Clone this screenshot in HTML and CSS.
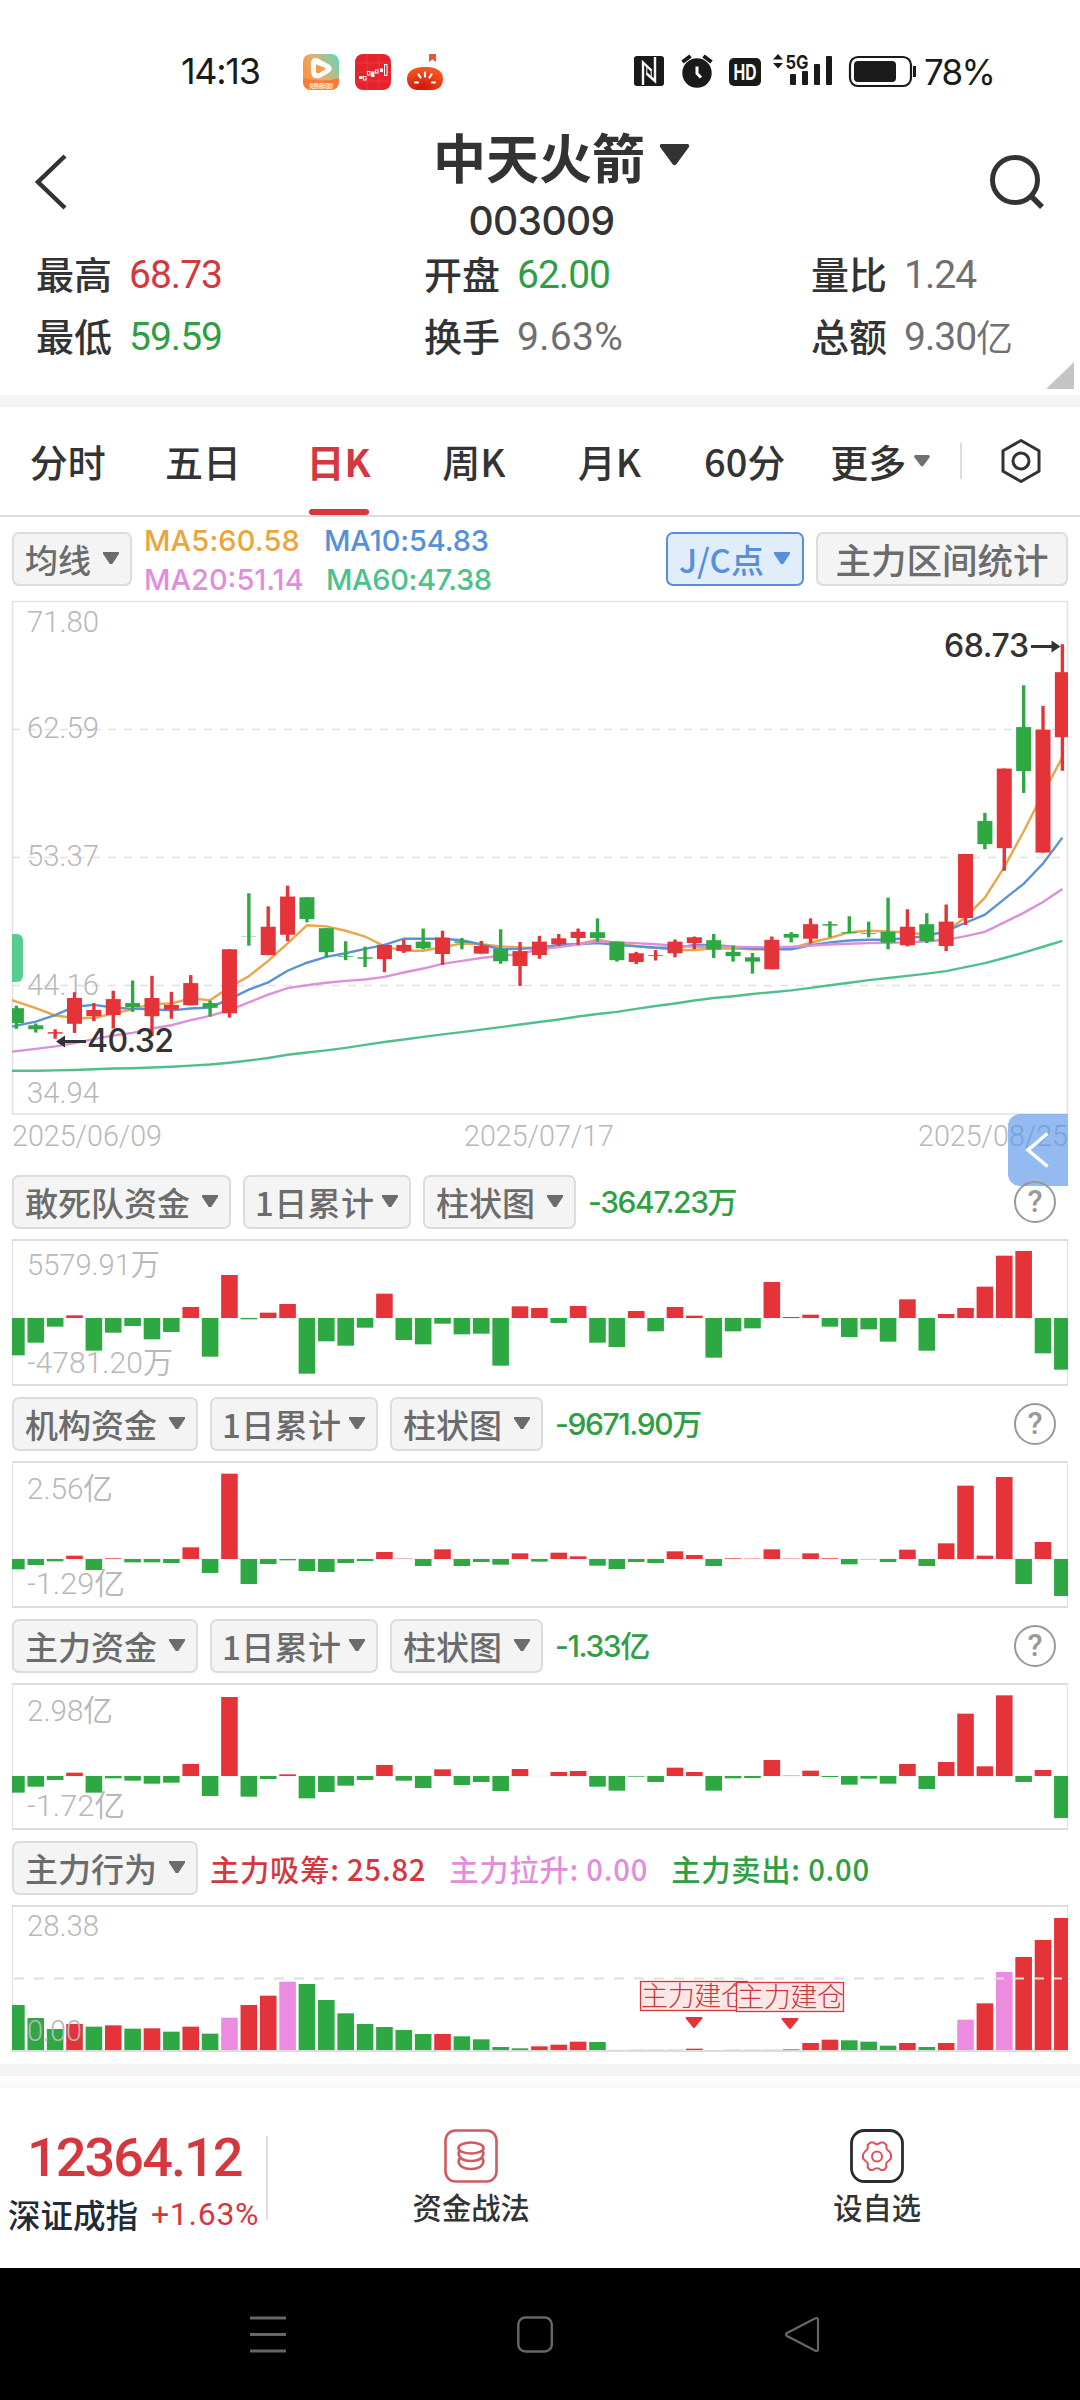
FILE: index.html
```html
<!DOCTYPE html>
<html lang="zh-CN">
<head>
<meta charset="utf-8">
<title>中天火箭 003009</title>
<link rel="stylesheet" href="styles.css">
</head>
<body>
<div class="screen">
  <div class="status">
    <span class="clock">14:13</span>
    <svg class="app" viewBox="0 0 36 36">
      <defs>
        <linearGradient id="ga" x1="0" y1=".6" x2="1" y2="0"><stop offset="0" stop-color="#ff9140"/><stop offset=".45" stop-color="#e0b070"/><stop offset="1" stop-color="#4fdcc0"/></linearGradient>
      </defs>
      <rect width="36" height="36" rx="8" fill="url(#ga)"/>
      <path d="M0 24Q18 29 36 24V28a8 8 0 0 1-8 8H8a8 8 0 0 1-8-8z" fill="#fa7a3c"/>
      <path d="M8 10Q8 2.500 15 4.500L26 10.500Q31 14 27 18L17 24Q8 26 8 17z" fill="#fff"/>
      <path d="M13 10.500L22 13.800Q23 14.500 22 15.500L15.500 19.500Q13 20 13 17.500z" fill="#f59a48"/>
      <text x="18" y="33.500" text-anchor="middle" font-size="5.500" font-weight="700" fill="#ffe9d0" textLength="24">免费看短剧</text>
    </svg>
    <svg class="app" viewBox="0 0 36 36">
      <rect width="36" height="36" rx="8" fill="#e6222b"/>
      <path d="M0 9H36M0 18H36M0 27H36M12 0V36M24 0V36" stroke="#f04a4c" stroke-width=".5"/>
      <g fill="#fff"><rect x="4" y="22" width="3.500" height="3"/><rect x="16" y="17.500" width="3.500" height="5.500"/><rect x="25" y="14.500" width="3" height="3.500"/></g>
      <g fill="none" stroke="#fff" stroke-width="1"><rect x="8.500" y="22.500" width="2.500" height="3.500"/><rect x="12.500" y="17.500" width="2.500" height="3.500"/><rect x="20.500" y="16" width="2.500" height="3"/><rect x="29.500" y="10.500" width="2.500" height="11"/></g>
    </svg>
    <svg class="app" viewBox="0 0 36 36">
      <defs><radialGradient id="gb" cx=".4" cy=".9" r=".8"><stop offset="0" stop-color="#cf1608"/><stop offset="1" stop-color="#f4541f"/></radialGradient></defs>
      <path d="M22 0h7v8l-3.500-2.500L22 8z" fill="#e65b30"/>
      <path d="M18 13C32 13 36 19 36 25C36 32 31 36 26 36H10C5 36 0 32 0 25C0 19 4 13 18 13z" fill="url(#gb)"/>
      <path d="M18 18.500v4M11.500 20.500l2 3M24.500 20.500l-2 3M8 28.500h3M28 28.500h-3" stroke="#fff" stroke-width="2.200" stroke-linecap="round"/>
    </svg>
    <div class="status-right">
      <svg width="30" height="30" viewBox="0 0 30 30"><rect width="30" height="30" rx="3" fill="#1a1a1a"/><path d="M9 29V6.500L17.500 14.500M12.500 17.500L21 25V1" fill="none" stroke="#fff" stroke-width="2.400"/><path d="M12.800 11V18M17.200 13.500V20.500" stroke="#fff" stroke-width="1"/></svg>
      <svg class="alarm" width="32" height="34" viewBox="0 0 32 34"><circle cx="16" cy="19" r="14.700" fill="#1a1a1a"/><path d="M1.500 8L9.500 2M30.500 8L22.500 2" stroke="#1a1a1a" stroke-width="4"/><path d="M16 12.500V19.500L20 23.500" fill="none" stroke="#fff" stroke-width="3"/></svg>
      <svg class="hd" width="32" height="28" viewBox="0 0 32 28"><rect width="32" height="28" rx="5" fill="#1a1a1a"/><text x="16" y="21.500" text-anchor="middle" font-size="21" font-weight="700" fill="#fff" textLength="23" lengthAdjust="spacingAndGlyphs">HD</text></svg>
      <svg class="signal" width="61" height="33" viewBox="0 0 61 33"><path d="M6 1L11 6.500H1zM6 15.500L11 10H1z" fill="#1a1a1a"/><text x="13.500" y="15.500" font-size="19" font-weight="700" fill="#1a1a1a" textLength="23" lengthAdjust="spacingAndGlyphs">5G</text><g fill="#1a1a1a"><rect x="18" y="21" width="6" height="11" rx="1"/><rect x="30" y="18" width="6" height="14" rx="1"/><rect x="42" y="11" width="6" height="21" rx="1"/><rect x="54" y="3" width="6" height="29" rx="1"/></g></svg>
      <svg class="battery" width="67" height="31" viewBox="0 0 67 31"><rect x="1" y="1" width="61" height="29" rx="8" fill="none" stroke="#1a1a1a" stroke-width="2.200"/><rect x="5" y="5" width="42" height="21" rx="4" fill="#1a1a1a"/><path d="M65.500 10V21" stroke="#1a1a1a" stroke-width="3"/></svg>
      <span class="pct">78%</span>
    </div>
  </div>

  <header class="head">
    <svg class="back" width="32" height="58" viewBox="0 0 32 58"><path d="M30 3L3 29L30 55" fill="none" stroke="#333" stroke-width="4.500"/></svg>
    <div class="title">
      <div class="name">中天火箭<svg width="31" height="22" viewBox="0 0 31 22"><path d="M2 0H29Q31 1 30 3L17.500 20Q15.500 22.500 13.500 20L1 3Q0 1 2 0z" fill="#333"/></svg></div>
      <div class="code">003009</div>
    </div>
    <svg class="search" width="56" height="56" viewBox="0 0 56 56"><circle cx="26" cy="26" r="22.500" fill="none" stroke="#333" stroke-width="5"/><path d="M42 42L53 53" stroke="#333" stroke-width="5.500"/></svg>
  </header>

  <section class="stats">
    <div><b>最高</b><span class="red">68.73</span></div>
    <div><b>开盘</b><span class="green">62.00</span></div>
    <div><b>量比</b><span>1.24</span></div>
    <div><b>最低</b><span class="green">59.59</span></div>
    <div><b>换手</b><span class="wide">9.63%</span></div>
    <div><b>总额</b><span>9.30<i>亿</i></span></div>
    <svg class="corner" width="28" height="27" viewBox="0 0 28 27"><path d="M28 0V27H0z" fill="#c4c4c4"/></svg>
  </section>

  <nav class="tabs">
    <a>分时</a><a>五日</a><a class="on">日K</a><a>周K</a><a>月K</a><a>60分</a>
    <a class="more">更多<svg width="16" height="12" viewBox="0 0 16 12"><path d="M1 0H15Q16.500 1 15.500 2.500L9.500 10.500Q8 12.500 6.500 10.500L.5 2.500Q-.5 1 1 0z" fill="#707070"/></svg></a>
    <i class="sep"></i>
    <svg class="hex" width="42" height="46" viewBox="0 0 42 46"><path d="M21 2.500L39 12.800V33.200L21 43.500L3 33.200V12.800z" fill="none" stroke="#333" stroke-width="3" stroke-linejoin="round"/><circle cx="21" cy="23" r="8" fill="none" stroke="#333" stroke-width="3"/></svg>
  </nav>

  <section class="ma">
    <div class="btn w120">均线<i class="tri"></i></div>
    <div class="legend">
      <span class="l5">MA5:60.58</span><span class="l10">MA10:54.83</span>
      <span class="l20">MA20:51.14</span><span class="l60">MA60:47.38</span>
    </div>
    <div class="btn jc">J/C点<i class="tri"></i></div>
    <div class="btn range">主力区间统计</div>
  </section>

  <section class="main">
    <svg id="kline" width="1080" height="575" viewBox="0 600 1080 575">
      <rect x="12.500" y="601.500" width="1055" height="512.500" fill="none" stroke="#e2e2e2" stroke-width="1.500"/>
      <path d="M12 729.500H1067M12 857.500H1067M12 985.500H1067" stroke="#e0e0e0" stroke-width="1.300" stroke-dasharray="8 8"/>
      <path d="M12 934h5a6 6 0 0 1 6 6v36a6 6 0 0 1-6 6h-5z" fill="#58cd90"/>
      <g class="axis">
        <text x="27" y="632" textLength="72">71.80</text>
        <text x="27" y="738" textLength="72">62.59</text>
        <text x="27" y="865.500" textLength="72">53.37</text>
        <text x="27" y="994.500" textLength="72">44.16</text>
        <text x="27" y="1102.500" textLength="72">34.94</text>
        <text x="12" y="1146" textLength="150">2025/06/09</text>
        <text x="464" y="1146" textLength="150">2025/07/17</text>
        <text x="918" y="1146" textLength="150">2025/08/25</text>
      </g>
      <g id="lines"></g>
      <g id="candles"></g>
      <g class="mark">
        <text x="87" y="1052" textLength="87">40.32</text>
        <text x="944" y="657" textLength="85">68.73</text>
        <path d="M86 1041.500H62M1031 646.500H1054" stroke="#333" stroke-width="3"/>
        <path d="M56 1041.500l9-6v12zM1060.500 646.500l-9-6v12z"/>
      </g>
    </svg>
    <div class="drawer"><svg width="60" height="72" viewBox="0 0 60 72"><path d="M39.500 19.500L20 36L39.500 52.500" fill="none" stroke="#fff" stroke-width="3.500"/></svg></div>
  </section>

  <section class="panel">
    <div class="bar"><div class="btn w218">敢死队资金<i class="tri"></i></div><div class="btn w168">1日累计<i class="tri"></i></div><div class="btn w153">柱状图<i class="tri"></i></div><span class="val">-3647.23<i>万</i></span><span class="help">?</span></div>
    <svg class="plot" width="1080" height="147" viewBox="0 0 1080 147"><g id="h1"></g><g class="axis"><text x="27" y="36" textLength="133">5579.91万</text><text x="27" y="134" textLength="146">-4781.20万</text></g></svg>
  </section>
  <section class="panel">
    <div class="bar"><div class="btn w186">机构资金<i class="tri"></i></div><div class="btn w168">1日累计<i class="tri"></i></div><div class="btn w153">柱状图<i class="tri"></i></div><span class="val">-9671.90<i>万</i></span><span class="help">?</span></div>
    <svg class="plot" width="1080" height="147" viewBox="0 0 1080 147"><g id="h2"></g><g class="axis"><text x="27" y="38" textLength="86">2.56亿</text><text x="27" y="133" textLength="98">-1.29亿</text></g></svg>
  </section>
  <section class="panel">
    <div class="bar"><div class="btn w186">主力资金<i class="tri"></i></div><div class="btn w168">1日累计<i class="tri"></i></div><div class="btn w153">柱状图<i class="tri"></i></div><span class="val">-1.33<i>亿</i></span><span class="help">?</span></div>
    <svg class="plot" width="1080" height="147" viewBox="0 0 1080 147"><g id="h3"></g><g class="axis"><text x="27" y="38" textLength="86">2.98亿</text><text x="27" y="133" textLength="98">-1.72亿</text></g></svg>
  </section>
  <section class="panel">
    <div class="bar"><div class="btn w186">主力行为<i class="tri"></i></div><span class="act red">主力吸筹: 25.82</span><span class="act pink">主力拉升: 0.00</span><span class="act green">主力卖出: 0.00</span></div>
    <svg class="plot" width="1080" height="147" viewBox="0 0 1080 147">
      <g id="h4"></g>
      <path d="M14 73.500H1062" stroke="#dedede" stroke-width="2" stroke-dasharray="10 10"/>
      <g class="axis"><text x="27" y="31" textLength="72">28.38</text><text x="27" y="135.500" textLength="55">0.00</text></g>
      <g class="tags">
        <rect x="640.500" y="76.500" width="107" height="29"/><text x="641" y="101" textLength="107">主力建仓</text>
        <rect x="736.500" y="77.500" width="107" height="29"/><text x="737" y="102" textLength="107">主力建仓</text>
        <path d="M686 112H702Q703 113 702 114L695 122.500Q694 124 693 122.500L686 114Q685 113 686 112zM782 113H798Q799 114 798 115L791 123.500Q790 125 789 123.500L782 115Q781 114 782 113z"/>
      </g>
    </svg>
  </section>

  <div class="strip"></div>
  <div class="shade"></div>
  <footer class="foot">
    <div class="index"><div class="num">12364.12</div><div class="sub">深证成指<span>+1.63%</span></div></div>
    <div class="act1"><svg width="54" height="54" viewBox="0 0 54 54"><rect x="1.500" y="1.500" width="51" height="51" rx="10" fill="none" stroke="#cf5a60" stroke-width="2.600"/><g fill="none" stroke="#cf5a60" stroke-width="2.600"><ellipse cx="27" cy="19" rx="12.500" ry="5.500"/><path d="M15.500 22C13.500 25 15 32 27 32S40.500 25 38.500 22M15.500 29.500C13.500 33 15 40 27 40S40.500 33 38.500 29.500"/></g></svg><span>资金战法</span></div>
    <div class="act2"><svg width="54" height="54" viewBox="0 0 54 54"><rect x="1.500" y="1.500" width="51" height="51" rx="13" fill="none" stroke="#2c2c2c" stroke-width="2.800"/><path d="M20.500 13.500L23.500 13.500Q27 17 30.500 13.500L33.500 13.500L36.500 16Q35.500 20.500 39.500 22.500L41 25.500V29.500L38.500 32Q35 34 36.500 38L34 41L31 41Q27 37.500 23 41L20 41L17.500 38Q19 34 15.500 32L13 29.500V25.500L15 22.500Q19 20 17.500 16z" fill="none" stroke="#e0525a" stroke-width="2" stroke-linejoin="round"/><circle cx="27" cy="27.500" r="5" fill="none" stroke="#e0525a" stroke-width="2"/></svg><span>设自选</span></div>
  </footer>

  <div class="sysnav">
    <svg width="36" height="37" viewBox="0 0 36 37"><path d="M0 2H36M0 18.500H36M0 35H36" stroke="#666" stroke-width="3"/></svg>
    <svg width="36" height="37" viewBox="0 0 36 37"><rect x="1.300" y="1.500" width="33.500" height="34" rx="7" fill="none" stroke="#666" stroke-width="2.500"/></svg>
    <svg width="36" height="37" viewBox="0 0 36 37"><path d="M31 2.500L3 17Q1 18.500 3 20L31 34.500Q34 36 34 33V4Q34 1 31 2.500z" fill="none" stroke="#666" stroke-width="2.200"/></svg>
  </div>
</div>
<script src="charts.js"></script>
</body>
</html>
```
FILE: styles.css
```css
* { box-sizing: border-box; }
body { margin: 0; background: #fff; color: #333; font-family: Roboto, "Noto Sans CJK SC", sans-serif; }
i { font-style: normal; }
svg { display: block; flex: none; overflow: visible; }
.screen { width: 1080px; height: 2400px; overflow: hidden; background: #fff; }
.red { color: #d4383e; }
.green { color: #2f9e44; }
.pink { color: #e28ddc; }

.status { display: flex; height: 125px; padding: 53px 0 0 181px; align-items: flex-start; color: #1a1a1a; font-family: Inter, "Noto Sans CJK SC", sans-serif; }
.clock { width: 122px; font-size: 36px; line-height: 36px; letter-spacing: -1.3px; }
.app { width: 36px; height: 36px; margin: 1px 16px 0 0; }
.status-right { display: flex; margin-left: 175px; padding-top: 3px; }
.alarm { margin: -2px 0 0 17px; }
.hd { margin: 2px 0 0 16px; }
.signal { margin: -3px 0 0 11px; }
.battery { margin-left: 16px; }
.pct { margin: -2px 0 0 8px; font-size: 35px; line-height: 36px; letter-spacing: -1.7px; }

.head { display: flex; height: 125px; padding: 0 35px; justify-content: space-between; }
.back { margin-top: 28px; }
.search { margin-top: 29px; }
.title { display: flex; flex-direction: column; align-items: center; width: 270px; margin-left: 67px; }
.name { display: flex; align-items: center; gap: 14px; height: 66px; margin-top: -2px; font: 700 53px/66px "Noto Sans CJK SC", sans-serif; }
.name svg { margin-top: -3px; }
.code { margin: 11px 40px 0 0; font: 500 39px/42px Inter, sans-serif; letter-spacing: -.6px; }

.stats { position: relative; display: grid; grid-template-columns: 388px 387px 1fr; grid-template-rows: 62px 62px; height: 145px; padding: 0 0 0 36px; margin-top: -7px; }
.stats > div { display: flex; align-items: center; gap: 17px; }
.stats b { margin-top: -2px; font: 500 38px/50px "Noto Sans CJK SC", sans-serif; }
.stats span { display: flex; align-items: center; margin-top: 2px; font-size: 39px; line-height: 50px; letter-spacing: -1px; }
.stats span:not(.red):not(.green) { color: #707070; }
.stats .red, .stats .green { font-weight: 450; }
.stats .wide { letter-spacing: .3px; }
.stats span i { font: 350 37px/50px "Noto Sans CJK SC", sans-serif; margin-top: -3px; }
.corner { position: absolute; right: 6px; bottom: -1px; }

.tabs { display: flex; align-items: center; height: 122px; margin-top: 7px; border-top: 12px solid #f4f4f4; border-bottom: 2px solid #ddd; font: 500 38px/50px "Noto Sans CJK SC", sans-serif; }
.tabs a { position: relative; width: 135.400px; text-align: center; }
.tabs .on { color: #d4383e; font-weight: 700; }
.tabs .on::after { content: ""; position: absolute; left: 38px; bottom: -29px; width: 60px; height: 6px; border-radius: 3px; background: #d4383e; }
.tabs .more { display: flex; width: 130px; margin-left: 18px; align-items: center; gap: 8px; }
.sep { width: 2px; height: 36px; background: #ddd; }
.hex { margin-left: 38px; margin-top: -1px; }

.btn { display: flex; flex: none; align-items: center; justify-content: space-between; height: 54px; padding: 0 11px; border: 2px solid #dcdcdc; border-radius: 7px; background: #f4f4f4; color: #6c6c6c; font: 500 33px/50px "Noto Sans CJK SC", sans-serif; white-space: nowrap; }
.tri { width: 16px; height: 12px; margin-top: -2px; background: currentColor; clip-path: polygon(0 0, 100% 0, 100% 15%, 58% 100%, 42% 100%, 0 15%); }
.w120 { width: 120px; }
.w218 { width: 219px; }
.w186 { width: 186px; }
.w168 { width: 168px; padding-left: 10px; letter-spacing: .4px; }
.w153 { width: 153px; }
.ma { display: flex; height: 83px; padding: 15px 12px 0; }
.legend { display: grid; grid-template-columns: 180px max-content; width: 522px; margin: -11px 0 0 12px; height: 78px; padding-right: 0; font: 500 29px/39px Inter, sans-serif; }
.l5 { color: #eba53c; letter-spacing: .15px; }
.l10 { color: #5590db; letter-spacing: -.1px; }
.l20 { color: #e28ddc; }
.l60 { padding-left: 2px; color: #4bc28b; letter-spacing: -.35px; }
.jc { width: 138px; margin-left: 1px; padding-right: 12px; border-color: #5590db; background: #e2edfc; color: #5590db; }
.range { width: 252px; margin-left: 12px; padding: 0; justify-content: center; font-size: 35.500px; }

.main { position: relative; height: 575px; }
.axis { font: 350 30px Roboto, "Noto Sans CJK SC", sans-serif; fill: #b8b8b8; }
.mark { font: 500 32px Inter, sans-serif; fill: #333; }
.drawer { position: absolute; left: 1008px; top: 514px; width: 60px; height: 72px; border-radius: 12px 0 0 12px; background: rgba(86, 149, 235, .64); }

.panel { height: 222px; }
.bar { position: relative; display: flex; height: 54px; margin-bottom: 10px; padding-left: 12px; gap: 12px; align-items: center; }
.val { color: #2f9e44; font: 500 30px/54px Inter, "Noto Sans CJK SC", sans-serif; letter-spacing: -1.400px; }
.help { width: 42px; height: 42px; margin: 0 24px 0 auto; border: 2.500px solid #999; border-radius: 50%; color: #999; text-align: center; font: 500 31px/37px Roboto, sans-serif; }
.act { margin-right: 11px; font: 500 29.300px/54px "Noto Sans CJK SC", sans-serif; letter-spacing: .75px; }
.plot { background: linear-gradient(#ddd, #ddd) 12px 0 / 1056px 2px no-repeat, linear-gradient(#ddd, #ddd) 12px 100% / 1056px 2px no-repeat, linear-gradient(#e2e2e2, #e2e2e2) 12px 0 / 1px 100% no-repeat, linear-gradient(#e2e2e2, #e2e2e2) 1067px 0 / 1px 100% no-repeat; }
.tags { font: 300 27px "Noto Sans CJK SC", sans-serif; fill: #c8383c; }
.tags rect { fill: #fde6e6; stroke: #cf3b40; stroke-width: 1.300; }
.tags path { fill: #e4343a; }

.strip { height: 12px; background: #f4f4f4; margin-top: 1px; }
.shade { height: 12px; background: linear-gradient(#fff, #f7f7f7); }
.foot { display: flex; height: 180px; background: #fff; }
.index { width: 269px; height: 84px; margin-top: 48px; border-right: 2px solid #ddd; color: #d4383e; }
.num { padding-left: 27px; font-size: 54px; font-weight: 500; line-height: 44px; letter-spacing: -1.900px; }
.sub { display: flex; gap: 13px; margin-top: 11px; padding-left: 8px; font: 500 32.500px/46px "Noto Sans CJK SC", sans-serif; color: #222a35; white-space: nowrap; }
.sub span { font: 400 32px/46px Roboto, sans-serif; letter-spacing: .7px; color: #d4383e; }
.act1, .act2 { display: flex; flex-direction: column; align-items: center; width: 407px; padding-top: 41px; font: 500 29.300px/40px "Noto Sans CJK SC", sans-serif; gap: 3px; }
.sysnav { display: flex; height: 132px; padding: 48px 0 0 250px; gap: 231px; background: #000; }
```
FILE: charts.js
```js
const NS = "http://www.w3.org/2000/svg";
const X0 = 16.4, PITCH = 19.37, LEFT = 12, RIGHT = 1068;
const RED = "#e4343a", GREEN = "#2ea843", PINK = "#ec8be0";

function add(parent, name, attrs) {
  const el = document.createElementNS(NS, name);
  for (const k in attrs) el.setAttribute(k, attrs[k]);
  parent.appendChild(el);
}

// A column centred on trading day i, clipped to the plot's sides.
function column(parent, i, width, top, height, fill) {
  const c = X0 + i * PITCH;
  const a = Math.max(LEFT, c - width / 2), b = Math.min(RIGHT, c + width / 2);
  add(parent, "rect", { x: a, y: top, width: b - a, height: height, fill: fill });
}

// Price area: chart units grow downwards, 31 is the top frame, 1441 the bottom.
const py = v => 590 + v / 2.75;

// colour, high, body top, body bottom, low
const days = `g1143,1150,1191,1207 g1192,1197,1208,1217 r1208,1216,1220,1234 r1106,1122,1193,1218 r1136,1155,1172,1186
r1102,1125,1169,1206 g1074,1136,1147,1160 r1061,1122,1172,1227 r1105,1141,1154,1179 r1059,1081,1142,1142
g1129,1136,1149,1173 r988,988,1164,1176 g834,953,954,978 r870,926,1004,1004 r813,843,948,966
g845,845,905,914 g930,930,996,1010 g966,1007,1009,1018 g981,1010,1014,1037 r976,976,1015,1051
r962,976,993,998 g931,967,985,988 r937,956,1001,1031 g957,966,970,988 r965,979,1000,1000
g933,987,1021,1028 r968,993,1034,1089 r951,967,1004,1014 r946,958,974,979 r931,940,957,976
g903,941,957,967 g967,967,1018,1022 r995,999,1023,1029 r990,1004,1006,1019 r961,967,999,1010
r953,955,971,988 g946,963,989,1012 g978,995,1007,1022 g998,1010,1022,1055 r953,962,1043,1043
g941,946,956,969 r903,919,959,972 g911,919,923,955 g897,941,944,944 g912,944,946,955
g846,940,970,988 r878,926,977,980 g889,919,966,971 r865,912,979,993 r726,726,902,921
g613,635,699,713 r491,491,710,772 g262,377,498,558 r319,384,722,722 r149,226,405,497`.split(/\s+/);

const candles = document.getElementById("candles");
days.forEach((d, i) => {
  const fill = d[0] === "r" ? RED : GREEN;
  const [hi, top, bot, lo] = d.slice(1).split(",").map(Number);
  column(candles, i, 15, py(top), (bot - top) / 2.75, fill);
  column(candles, i, 3.4, py(hi), (lo - hi) / 2.75, fill);
});

const averages = [
  ["#eaa64a", [1132,1150,1170,1177,1177,1165,1153,1138,1137,1123,1128,1092,1062,1020,972,922,925,937,953,980,992,992,982,972,974,980,983,984,976,974,961,972,979,984,990,990,985,986,988,988,985,970,957,941,937,939,942,948,940,900,846,762,664,560,460]],
  ["#5a92d8", [1198,1187,1169,1146,1141,1148,1152,1153,1156,1151,1148,1125,1099,1079,1047,1025,1009,999,987,976,959,959,959,963,975,988,987,984,976,974,971,976,980,984,984,976,976,981,987,988,988,977,969,964,962,962,957,952,938,915,893,850,808,752,681]],
  ["#dd90d8", [1268,1262,1255,1246,1235,1225,1218,1206,1197,1183,1171,1155,1134,1113,1095,1087,1080,1075,1071,1064,1052,1041,1028,1020,1012,1006,1001,988,982,975,966,969,971,974,978,981,981,981,982,982,981,978,975,973,971,970,969,966,962,952,940,914,888,858,822]],
  ["#50bf8c", [1322,1322,1321,1320,1318,1316,1315,1313,1311,1308,1305,1300,1294,1287,1278,1272,1266,1259,1251,1243,1236,1229,1222,1216,1209,1202,1195,1188,1181,1173,1166,1160,1152,1144,1137,1129,1122,1117,1111,1106,1101,1094,1087,1080,1073,1067,1061,1055,1048,1037,1026,1012,997,981,965]]
];
const lines = document.getElementById("lines");
averages.forEach(([stroke, v]) => {
  const first = v[0] - (v[1] - v[0]) * 0.23;
  const pts = [[LEFT, py(first)]].concat(v.map((y, i) => [X0 + i * PITCH, py(y)]));
  add(lines, "polyline", { points: pts.join(" "), fill: "none", stroke: stroke, "stroke-width": 2.4 });
});

// Money-flow columns, in thirds of a pixel from the zero line.
function flow(id, zero, values) {
  const g = document.getElementById(id);
  add(g, "path", { d: `M${LEFT} ${zero}H${RIGHT}`, stroke: "#eee", "stroke-width": 1 });
  values.forEach((v, i) => column(g, i, 16.6, v > 0 ? zero - v / 3 : zero, Math.abs(v) / 3, v > 0 ? RED : GREEN));
}
flow("h1", 79, [-112,-74,-26,8,-98,-44,-24,-64,-42,33,-116,129,-4,16,42,-167,-70,-83,-29,73,-66,-79,-17,-49,-47,-143,35,30,-15,36,-74,-87,21,-40,33,7,-119,-40,-31,108,3,10,-26,-57,-34,-71,56,-98,12,30,94,187,201,-106,-155]);
flow("h2", 98, [-31,-18,-7,10,-33,2,-10,-10,-12,35,-42,256,-75,-15,-4,-36,-39,-12,-6,21,1,-21,29,-21,-9,-17,17,-8,19,8,-20,-30,-9,-12,23,12,-21,2,1,29,1,17,2,-16,-1,-9,28,-21,47,220,10,246,-75,51,-111]);
flow("h3", 93, [-50,-32,-12,10,-50,-7,-14,-23,-20,36,-60,237,-62,-9,5,-67,-48,-29,-12,33,-14,-36,20,-27,-18,-45,21,0,12,15,-32,-44,-2,-18,25,12,-44,-7,-6,48,1,16,-3,-26,-8,-23,36,-39,42,187,29,242,-18,18,-126]);

const fills = { r: RED, g: GREEN, p: PINK, n: "#ddd" };
const g4 = document.getElementById("h4");
"g135 g96 g63 r78 g70 r74 g64 r65 g55 r70 g49 p97 r135 r163 p205 g198 g150 g110 g78 g69 g60 g48 r48 g41 g32 g9 g5 r11 r16 r25 g24 n1 n2 n2 n2 r4 n0 n2 n2 n2 r2 r21 r31 g29 g25 g13 r21 g9 r21 p91 r140 p234 r279 r330 r396"
  .split(" ").forEach((s, i) => {
    const h = s.slice(1) / 3;
    column(g4, i, 16.6, 145 - h, h, fills[s[0]]);
  });

document.querySelectorAll(".axis text").forEach(t => t.setAttribute("lengthAdjust", "spacingAndGlyphs"));
```
